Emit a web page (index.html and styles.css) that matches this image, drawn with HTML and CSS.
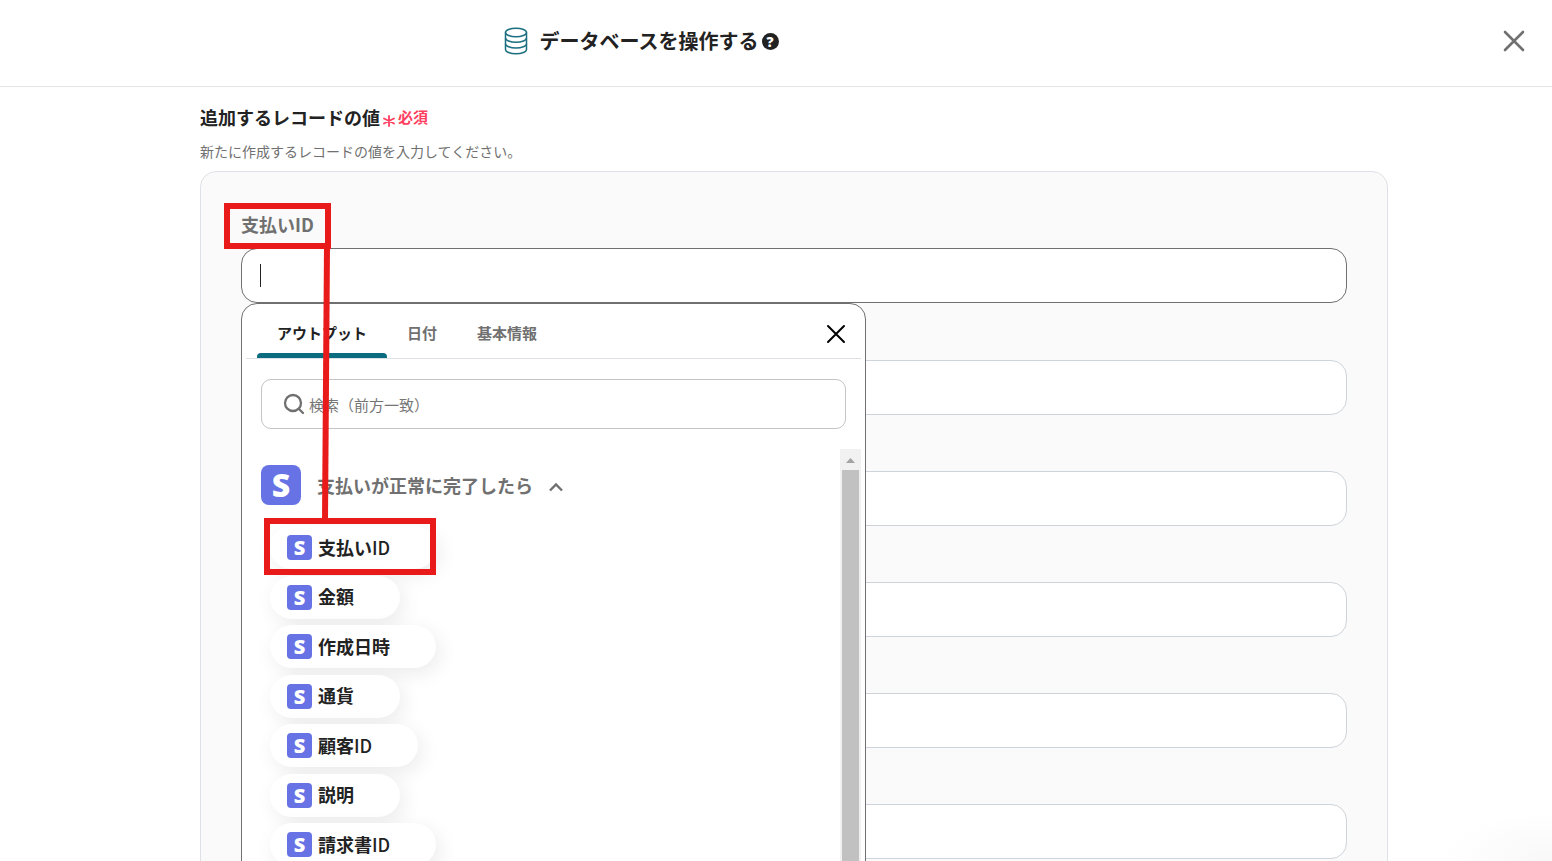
FILE: index.html
```html
<!DOCTYPE html>
<html lang="ja">
<head>
<meta charset="utf-8">
<meta name="viewport" content="width=device-width, initial-scale=1">
<title>データベースを操作する</title>
<link rel="stylesheet" href="styles.css">
</head>
<body>
<div class="app">
  <header class="header">
    <svg class="db-icon" viewBox="0 0 24 28" width="24" height="28" fill="none" stroke="#1b6f80" stroke-width="1.5" aria-hidden="true">
      <ellipse cx="12" cy="5.5" rx="10.5" ry="4.2"/>
      <path d="M1.500 5.500V22.500C1.500 24.800 6.200 26.700 12 26.700S22.500 24.800 22.500 22.500V5.500"/>
      <path d="M1.500 11C1.500 13.300 6.200 15.200 12 15.200S22.500 13.300 22.500 11M1.500 16.800C1.500 19.100 6.200 21 12 21S22.500 19.100 22.500 16.800"/>
    </svg>
    <h1 class="title">データベースを操作する</h1>
    <button class="help" type="button" aria-label="ヘルプ">?</button>
    <button class="close" type="button" aria-label="閉じる">
      <svg viewBox="0 0 24 24" width="24" height="24" stroke="#707070" stroke-width="2.6" stroke-linecap="round" aria-hidden="true"><path d="M3 3L21 21M21 3L3 21"/></svg>
    </button>
  </header>

  <main class="main">
    <div class="heading">
      <h2 class="heading-text">追加するレコードの値</h2>
      <svg class="star" viewBox="0 0 12 12" width="12" height="12" stroke="#ff3e5f" stroke-width="1.8" stroke-linecap="round" aria-hidden="true"><path d="M6 1V11M1 3.500L11 8.500M11 3.500L1 8.500"/></svg>
      <span class="required">必須</span>
    </div>
    <p class="description">新たに作成するレコードの値を入力してください。</p>

    <form class="panel">
      <div class="field">
        <label class="field-label" for="payment-id">支払いID</label>
        <div class="field-control">
          <input class="input input-active" id="payment-id" type="text">
          <span class="caret"></span>

          <div class="picker">
            <div class="tabs">
              <button class="tab tab-active" type="button">アウトプット</button>
              <button class="tab" type="button">日付</button>
              <button class="tab" type="button">基本情報</button>
              <button class="picker-close" type="button" aria-label="閉じる">
                <svg viewBox="0 0 20 20" width="20" height="20" stroke="#000" stroke-width="2" stroke-linecap="round" aria-hidden="true"><path d="M2 2L18 18M18 2L2 18"/></svg>
              </button>
            </div>
            <div class="search">
              <svg viewBox="0 0 22 22" width="22" height="22" fill="none" stroke="#707070" stroke-width="2.3" stroke-linecap="round" aria-hidden="true"><circle cx="10" cy="10" r="8"/><path d="M16 16L20 20"/></svg>
              <input class="search-input" type="text" placeholder="検索（前方一致）" aria-label="検索">
            </div>
            <div class="results">
              <div class="results-body">
                <button class="group" type="button">
                  <span class="logo logo-large">S</span>
                  <span>支払いが正常に完了したら</span>
                  <svg class="chevron" viewBox="0 0 14 10" width="14" height="10" fill="none" stroke="#707070" stroke-width="2.400" aria-hidden="true"><path d="M1 8.500L7 2.500L13 8.500"/></svg>
                </button>
                <div class="pills">
                  <button class="pill" type="button"><span class="logo">S</span><span class="pill-text">支払い<span class="latin">ID</span></span></button>
                  <button class="pill" type="button"><span class="logo">S</span><span class="pill-text">金額</span></button>
                  <button class="pill" type="button"><span class="logo">S</span><span class="pill-text">作成日時</span></button>
                  <button class="pill" type="button"><span class="logo">S</span><span class="pill-text">通貨</span></button>
                  <button class="pill" type="button"><span class="logo">S</span><span class="pill-text">顧客<span class="latin">ID</span></span></button>
                  <button class="pill" type="button"><span class="logo">S</span><span class="pill-text">説明</span></button>
                  <button class="pill" type="button"><span class="logo">S</span><span class="pill-text">請求書<span class="latin">ID</span></span></button>
                </div>
              </div>
              <div class="scrollbar">
                <svg viewBox="0 0 21 21" width="21" height="21" fill="#a3a3a3" aria-hidden="true"><path d="M6 14L10.500 9L15 14Z"/></svg>
                <div class="thumb"></div>
              </div>
            </div>
          </div>

          <svg class="marks" viewBox="0 0 220 380" width="220" height="380" fill="none" stroke="#e91a1a" stroke-width="6" aria-hidden="true">
            <rect x="6" y="8" width="101" height="40"/>
            <path d="M106 48L104 323"/>
            <rect x="46" y="323" width="166" height="51"/>
          </svg>
        </div>
      </div>
      <input class="input" type="text" aria-label="金額">
      <input class="input" type="text" aria-label="作成日時">
      <input class="input" type="text" aria-label="通貨">
      <input class="input" type="text" aria-label="顧客ID">
      <input class="input" type="text" aria-label="説明">
    </form>
  </main>
  <div class="corner-glow"></div>
</div>
</body>
</html>
```
FILE: styles.css
```css
* {
  box-sizing: border-box;
}

body {
  margin: 0;
  background: #fff;
  color: #222;
  font-family: "Noto Sans CJK JP", sans-serif;
}

button {
  padding: 0;
  border: 0;
  background: none;
  color: inherit;
  font: inherit;
}

input {
  font: inherit;
}

svg {
  display: block;
  flex: none;
}

.app {
  position: relative;
  height: 100vh;
  overflow: hidden;
}

.header {
  position: relative;
  display: flex;
  align-items: center;
  justify-content: center;
  height: 87px;
  padding: 0 270px 4px 0;
  border-bottom: 1px solid #e2e4e5;
}

.title {
  margin: 0 3px 0 12px;
  font-size: 20px;
  line-height: 28px;
}

.help {
  width: 17px;
  height: 17px;
  border-radius: 50%;
  background: #222;
  color: #fff;
  font-family: "Open Sans", sans-serif;
  font-size: 14px;
  font-weight: 800;
  line-height: 17px;
  text-align: center;
}

.close {
  position: absolute;
  top: 29px;
  right: 26px;
}

.main {
  padding: 16px 164px 0 200px;
}

.heading {
  display: flex;
  align-items: center;
  gap: 3px;
  height: 28px;
}

.heading-text {
  margin: 0;
  font-size: 18px;
  line-height: 28px;
}

.star {
  margin-top: 8px;
}

.required {
  color: #ff3e5f;
  font-size: 15px;
  font-weight: 700;
  line-height: 28px;
}

.description {
  margin: 10px 0;
  color: #707070;
  font-size: 14px;
  font-weight: 400;
  line-height: 20px;
}

.panel {
  display: flex;
  flex-direction: column;
  gap: 56px;
  padding: 38px 40px;
  border: 1px solid #dee2e6;
  border-radius: 16px;
  background: #fafafa;
}

.field {
  display: flex;
  flex-direction: column;
  gap: 10px;
  padding-bottom: 1px;
}

.field-label {
  color: #707070;
  font-size: 18px;
  font-weight: 700;
  line-height: 28px;
}

.field-control {
  position: relative;
}

.input {
  display: block;
  width: 100%;
  height: 55px;
  padding: 0 18px;
  border: 1px solid #ced4da;
  border-radius: 16px;
  background: #fff;
}

.input-active {
  border-color: #707070;
}

.caret {
  position: absolute;
  top: 16px;
  left: 19px;
  width: 1px;
  height: 23px;
  background: #222;
}

.picker {
  position: absolute;
  z-index: 1;
  top: 55px;
  left: 0;
  width: 625px;
  border: 1px solid #707070;
  border-radius: 16px;
  background: #fff;
}

.tabs {
  display: flex;
  height: 55px;
  margin: 0 4px;
  padding: 0 15px 0 11px;
  border-bottom: 1px solid #dee2e6;
}

.tab {
  position: relative;
  padding: 2px 20px 0;
  color: #707070;
  font-size: 15px;
  font-weight: 700;
}

.tab-active {
  color: #222;
}

.tab-active::after {
  content: "";
  position: absolute;
  right: 0;
  bottom: 0;
  left: 0;
  height: 5px;
  border-radius: 4px 4px 0 0;
  background: #0b6b7f;
}

.picker-close {
  margin: 6px 0 0 auto;
}

.search {
  display: flex;
  align-items: center;
  gap: 4px;
  height: 50px;
  margin: 20px 19px;
  padding: 0 21px;
  border: 1px solid #c4c4c8;
  border-radius: 10px;
}

.search-input {
  flex: 1;
  min-width: 0;
  padding: 0;
  border: 0;
  outline: 0;
  font-size: 15px;
}

.search-input::placeholder {
  color: #757575;
}

.results {
  display: flex;
  margin-right: 4px;
}

.results-body {
  flex: 1;
  padding: 16px 0 20px 19px;
}

.group {
  display: flex;
  align-items: center;
  gap: 16px;
  color: #707070;
  font-size: 18px;
  font-weight: 700;
}

.chevron {
  margin-top: 4px;
}

.logo {
  flex: none;
  width: 25px;
  height: 25px;
  border-radius: 4px;
  background: #6772e5;
  color: #fff;
  font-family: "Noto Sans", sans-serif;
  font-size: 20px;
  font-weight: 900;
  line-height: 25px;
  text-align: center;
}

.logo-large {
  width: 40px;
  height: 40px;
  border-radius: 8px;
  font-size: 32px;
  line-height: 40px;
}

.pills {
  display: flex;
  flex-direction: column;
  align-items: flex-start;
  justify-content: space-between;
  height: 340px;
  margin: 21px 0 0 9px;
}

.pill {
  display: flex;
  align-items: center;
  gap: 6px;
  height: 43px;
  padding: 0 46px 0 17px;
  border-radius: 22px;
  background: #fff;
  box-shadow: 4px 6px 20px rgba(0, 0, 0, 0.08);
  font-size: 18px;
  font-weight: 700;
}

.pill-text {
  padding-bottom: 2px;
}

.latin {
  font-weight: 500;
}

.scrollbar {
  width: 21px;
  background: #f1f1f1;
}

.thumb {
  height: 1000px;
  margin: 0 2px;
  background: #c1c1c1;
}

.marks {
  position: absolute;
  z-index: 2;
  top: -50px;
  left: -20px;
  pointer-events: none;
}

.corner-glow {
  position: absolute;
  right: 0;
  bottom: 0;
  width: 110px;
  height: 50px;
  background: radial-gradient(ellipse at bottom right, #f8f8f8, transparent 70%);
}
```
